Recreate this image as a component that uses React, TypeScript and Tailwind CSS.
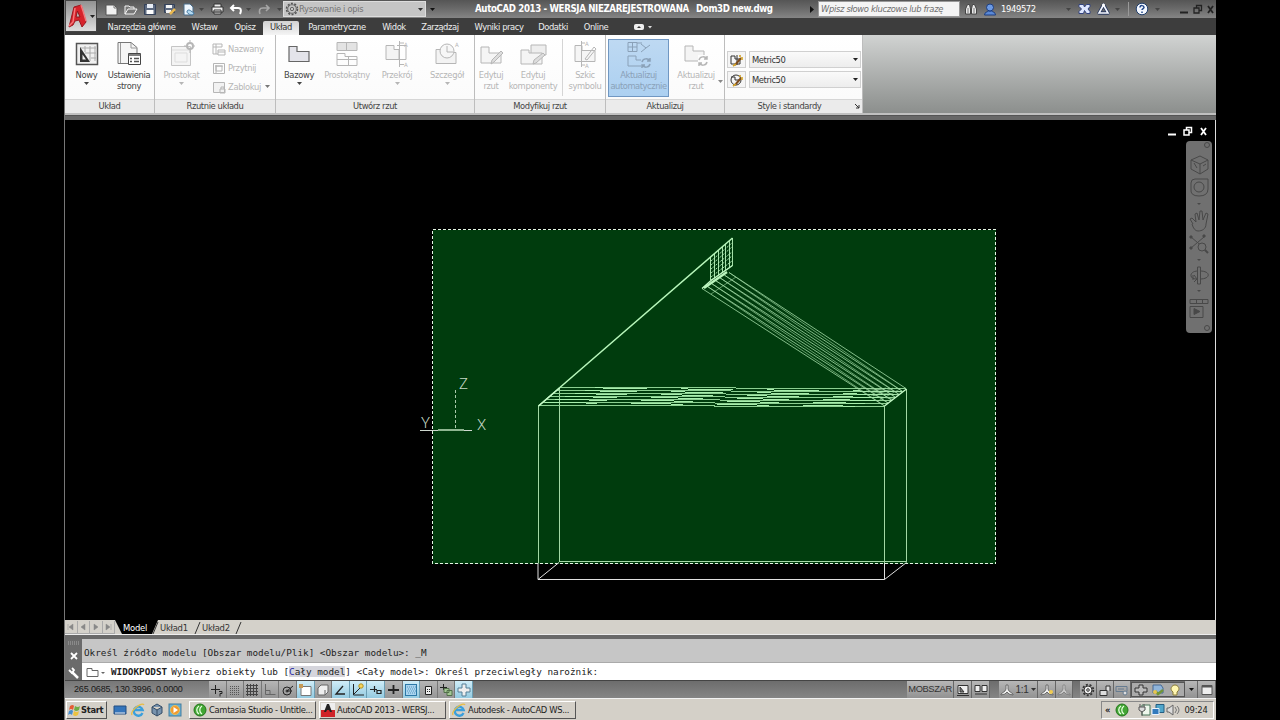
import type { ReactNode } from "react";

type SvgProps = { w?: number; h?: number; children: ReactNode; className?: string };

function Svg({ w = 14, h = 14, children, className }: SvgProps) {
  return (
    <svg width={w} height={h} viewBox={`0 0 ${w} ${h}`} fill="none" stroke="currentColor" className={`shrink-0 ${className ?? ""}`}>
      {children}
    </svg>
  );
}

function Caret({ className }: { className?: string }) {
  return (
    <Svg w={5} h={3} className={className}>
      <path d="M0 0h5L2.500 3z" fill="currentColor" stroke="none" />
    </Svg>
  );
}

function QuickAccess() {
  return (
    <div className="flex items-center text-white">
      <Svg w={15} className="mr-[4px]">
        <path d="M2 3h8l3 3v7H2z" fill="#f1f1f1" stroke="#555" />
        <path d="M10 3v3h3" stroke="#777" />
      </Svg>
      <Svg w={15} className="mr-[5px]">
        <path d="M2 12V4h4l1 1h4v2M2 12l3-5h9l-3 5z" fill="#777" stroke="#f5f5f5" />
      </Svg>
      <Svg w={14} className="mr-[6px]">
        <path d="M1.500 2.500h11v10h-11z" fill="#5d6a80" stroke="#35425a" />
        <path d="M4 2h6v4H4z" fill="#e8edf5" stroke="none" />
        <path d="M3.500 8h7v4h-7z" fill="#fff" stroke="none" />
      </Svg>
      <Svg w={14} className="mr-[5px]">
        <path d="M1.500 2.500h10v8h-10z" fill="#5d6a80" stroke="#35425a" />
        <path d="M3 3h6v3H3zM3 8h5v3H3z" fill="#f4f4f4" stroke="none" />
        <path d="M7 12l5-5" stroke="#e9b850" strokeWidth={2.500} />
      </Svg>
      <Svg w={14}>
        <path d="M2 2h6l3 3v8H2z" fill="#eef6fd" stroke="#486c8a" />
        <path d="M5 10c0-3 3-2 4-1l3 2c0 3-6 2-7-1z" fill="#b5daf1" stroke="#4377a0" />
      </Svg>
      <Caret className="ml-[3px] mr-[6px] text-[#444]" />
      <Svg w={15}>
        <path d="M4 5V2h7v3M2 5h11v5H2zM4 8h7v4H4z" fill="#eee" stroke="#333" />
        <path d="M5 10h5" stroke="#555" />
      </Svg>
      <Svg w={14} className="ml-[4px]">
        <path d="M5 3L2 6l3 3M2.500 6H9c4 0 3 4 2 6" stroke="#fff" strokeWidth={2} />
      </Svg>
      <Caret className="ml-[3px] mr-[7px] text-[#444]" />
      <Svg w={13}>
        <path d="M8 3l3 3-3 3M10.500 6H5C1 6 1 9 2 12" stroke="#a7a7a7" strokeWidth={1.600} />
      </Svg>
      <Caret className="ml-[6px] text-[#444]" />
    </div>
  );
}

function WindowButtons({ className }: { className?: string }) {
  return (
    <div className={`flex shrink-0 items-center ${className ?? ""}`}>
      <Svg w={10} h={12}>
        <path d="M1 9.500h8" strokeWidth={2} />
      </Svg>
      <Svg w={10} h={12}>
        <path d="M1 5h5v5H1zM3.500 5V2.500h5v5h-2" strokeWidth={1.500} />
      </Svg>
      <Svg w={9} h={12}>
        <path d="M2 3l5 7M7 3l-5 7" strokeWidth={1.800} />
      </Svg>
    </div>
  );
}

function Header() {
  return (
    <div className="relative">
      <div className="flex h-[18px] w-[1151px] items-center overflow-hidden bg-linear-to-b from-[#555] via-[#6b6b6b] to-[#858585] text-[9.300px]">
        <div className="flex w-[218px] shrink-0 justify-end pr-[1px]">
          <QuickAccess />
        </div>
        <div className="flex h-4 w-[143px] shrink-0 items-center border border-[#ddd] bg-[#c5c5c5] pl-px text-[#757575]">
          <Svg w={14}>
            <circle cx={7} cy={7} r={5.500} stroke="#555" strokeWidth={1.500} strokeDasharray="2 1.450" />
            <circle cx={7} cy={7} r={4.300} stroke="#666" />
            <circle cx={7} cy={7} r={1.700} stroke="#666" />
          </Svg>
          <span className="w-[119px] shrink-0 tracking-[-0.300px]">Rysowanie i opis</span>
          <Caret className="text-[#333]" />
        </div>
        <div className="w-[49px] shrink-0 pl-[4px]">
          <Caret className="text-[#111]" />
        </div>
        <div className="flex w-[343px] shrink-0 items-center whitespace-nowrap text-[9.600px] font-bold text-white">
          <span className="w-[221px] tracking-[-0.350px]">AutoCAD 2013 - WERSJA NIEZAREJESTROWANA</span>
          <span className="tracking-[-0.350px]">Dom3D new.dwg</span>
          <Svg w={5} h={7} className="ml-auto mr-[3px]">
            <path d="M0 0l4 3.500L0 7z" fill="#111" stroke="none" />
          </Svg>
        </div>
        <div className="flex h-4 w-[142px] shrink-0 items-center whitespace-nowrap border border-[#999] bg-[#f4f4f4] pl-[2px] italic tracking-[-0.320px] text-[#6e6e6e]">
          Wpisz słowo kluczowe lub frazę
        </div>
        <Svg w={14} className="ml-[4px]">
          <path d="M1.500 12V7l2-4.500h2l1 4.500v5zM7.500 12V7l1-4.500h2l2 4.500v5z" fill="#e9e9e9" stroke="#444" />
          <path d="M4 6v5M10 6v5" stroke="#777" />
        </Svg>
        <Svg w={14} className="ml-[5px]">
          <path d="M1.500 13c0-3 3-3 4-4h3c1 1 4 1 4 4z" fill="#5b89d6" stroke="#1c3d80" />
          <circle cx={7} cy={5.500} r={3.500} fill="#6c9ae4" stroke="#1c3d80" />
        </Svg>
        <span className="ml-[4px] w-[67px]">
          <span className="tracking-[-0.350px] text-white">1949572</span>
        </span>
        <Caret className="mr-[7px] text-[#444]" />
        <Svg w={13}>
          <path d="M1 2.500h4.500l1 2.500 2-2.500H12v2L10 7l2 2.500v2H8.500l-2-3-1 3H1v-2L3.500 7 1 4.500z" fill="#dfe7ff" stroke="#33437f" />
        </Svg>
        <Svg w={15} className="ml-[5px]">
          <path d="M7.500 3L12 11H3z" stroke="#29395f" strokeWidth={3.500} strokeLinejoin="round" />
          <path d="M7.500 3L12 11H3z" stroke="#f5f8ff" strokeWidth={1.600} />
          <circle cx={7.500} cy={3} r={1.500} fill="#fff" stroke="none" />
        </Svg>
        <Caret className="ml-[4px] text-[#444]" />
        <span className="ml-[8px] h-[14px] border-l border-[#999]" />
        <Svg w={14} className="ml-[6px]">
          <circle cx={7} cy={7} r={5.800} fill="#f4f8ff" stroke="#22406e" />
          <path d="M5 5.500c0-3 4-2 4 0 0 1-2 1.200-2 2.500M7 9.500V11" stroke="#1f4588" strokeWidth={1.500} />
        </Svg>
        <Caret className="ml-[6px] mr-[19px] text-[#444]" />
        <div className="flex gap-[4px]">
          <Svg w={10} h={12} className="text-[#222]">
            <path d="M1 9.500h8" strokeWidth={2} />
          </Svg>
          <Svg w={10} h={12} className="text-[#222]">
            <path d="M1 5h5v5H1zM3.500 5V2.500h5v5h-2" strokeWidth={1.300} />
          </Svg>
          <Svg w={9} h={12} className="text-[#222]">
            <path d="M1 3l5 7M6 3l-5 7" strokeWidth={1.800} />
          </Svg>
        </div>
      </div>
      <Tabs />
      {/* application button spans both header rows */}
      <div className="absolute left-0 top-0 flex h-[32px] w-[32px] items-center border border-[#444] bg-linear-to-b from-[#929292] to-[#dedede]">
        <Svg w={23} h={28}>
          <path d="M3 25L8 5l7-2 5 17-4 5-3-7-4 1-2 4z" fill="#d7232b" stroke="#9b1820" />
          <path d="M10 15l1.500-6 2.500 6z" fill="#bababa" stroke="#8f171d" />
          <path d="M3 24l4-4 2-14M15 3l2 6 3 10" stroke="#f6777a" strokeWidth={1.500} />
        </Svg>
        <Caret className="ml-px text-[#222]" />
      </div>
    </div>
  );
}

const tabs = [
  { name: "Narzędzia główne", width: "w-[81px]" },
  { name: "Wstaw", width: "w-[45px]" },
  { name: "Opisz", width: "w-[36px]" },
  { name: "Układ", width: "w-[36px]", active: true },
  { name: "Parametryczne", width: "w-[76px]" },
  { name: "Widok", width: "w-[38px]" },
  { name: "Zarządzaj", width: "w-[54px]" },
  { name: "Wyniki pracy", width: "w-[64px]" },
  { name: "Dodatki", width: "w-[44px]" },
  { name: "Online", width: "w-[42px]" },
];

function Tabs() {
  return (
    <div className="flex h-[17px] items-end bg-[#3d3d3d] pl-[36px] text-[9.300px] tracking-[-0.400px]">
      {tabs.map((tab) => (
        <div
          key={tab.name}
          className={`flex h-[14px] items-center justify-center whitespace-nowrap pb-[2px] ${tab.width} ${tab.active ? "rounded-t-xs bg-linear-to-b from-[#d2d2d2] to-[#f5f5f5] text-[#333]" : "text-[#eee]"}`}
        >
          {tab.name}
        </div>
      ))}
      <Svg w={20} h={10} className="mb-[3px] ml-[17px] text-[#eee]">
        <rect x={0.500} y={2.500} width={9} height={5} rx={1} fill="#eee" />
        <path d="M3 6l2-2 2 2z" fill="#333" stroke="none" />
        <path d="M14 4h4l-2 2.500z" fill="#ddd" stroke="none" />
      </Svg>
    </div>
  );
}

type ToolProps = { icon: ReactNode; lines: string[]; width: string; muted?: boolean; caret?: boolean };

function Tool({ icon, lines, width, muted, caret }: ToolProps) {
  return (
    <div className={`flex shrink-0 flex-col items-center ${width} ${muted ? "text-[#b6b6b6]" : "text-[#444]"}`}>
      <div className="flex h-[30px] items-center justify-center">{icon}</div>
      <div className="mt-px whitespace-nowrap text-center text-[9.300px] leading-[10.500px] tracking-[-0.350px]">
        {lines.map((line) => (
          <div key={line}>{line}</div>
        ))}
      </div>
      {caret && <Caret className="mt-px" />}
    </div>
  );
}

function Panel({ title, width, children, corner }: { title: string; width: string; children: ReactNode; corner?: boolean }) {
  return (
    <div className={`flex shrink-0 flex-col border-r border-[#bdbdbd] ${width}`}>
      <div className="flex h-[64px] bg-linear-to-b from-white to-[#fbfbfb] pt-[4px]">{children}</div>
      <div className="flex h-[14px] items-center border-t border-[#d6d6d6] bg-[#ebebeb] pb-px text-[9.300px] tracking-[-0.400px] text-[#444]">
        <span className="flex-1 text-center">{title}</span>
        {corner && (
          <Svg w={6} h={6} className="mr-[2px] text-[#333]">
            <path d="M1 1l4 4M5 2v3H2" />
          </Svg>
        )}
      </div>
    </div>
  );
}

const baseShape = "M3 6h8v6h12v10H3z";

function SmallTool({ label, icon, caret }: { label: string; icon: ReactNode; caret?: boolean }) {
  return (
    <div className="flex h-[19px] items-center text-[9.300px] tracking-[-0.350px] text-[#b6b6b6]">
      <Svg w={14}>{icon}</Svg>
      <span className="ml-[2px]">{label}</span>
      {caret && <Caret className="ml-[4px] text-[#777]" />}
    </div>
  );
}

function StyleRow({ icon }: { icon: ReactNode }) {
  return (
    <div className="flex h-[17px] items-center">
      <div className="flex h-[17px] w-[19px] items-center justify-center border border-[#d0d0d0] bg-[#f5f5f5]">
        <Svg w={15} className="text-[#333]">
          {icon}
          <path d="M6 12l6-7" stroke="#7b4c20" strokeWidth={2} />
          <path d="M4 13l3-2M11 2v2M13 4v3" stroke="#d3a329" strokeWidth={1.600} />
        </Svg>
      </div>
      <div className="ml-[3px] flex h-[17px] w-[112px] items-center border border-[#d0d0d0] bg-linear-to-b from-[#fafafa] to-[#ededed] pl-[2px] text-[9.300px] tracking-[-0.400px] text-[#333]">
        <span className="flex-1">Metric50</span>
        <Caret className="mr-[2px] text-[#222]" />
      </div>
    </div>
  );
}

function Ribbon() {
  return (
    <div className="flex h-[80px] border-b-2 border-[#c0c0c0] bg-linear-to-b from-[#d1d3d2] to-[#8c8f8d]">
      <Panel title="Układ" width="w-[90px]">
        <Tool
          width="w-[43px]"
          lines={["Nowy"]}
          caret
          icon={
            <Svg w={24} h={26}>
              <rect x={1.500} y={2.500} width={21} height={21} fill="#f0f0f0" stroke="#555" strokeWidth={1.500} />
              <path d="M10 5v6M15 5v15M20 5v15M5 7h16M10 12h11M16 17h5" stroke="#aaa" />
              <path d="M5 6v15h10z" fill="#333" stroke="none" />
              <path d="M7.500 13.500v5h3.500z" fill="#eee" stroke="none" />
            </Svg>
          }
        />
        <Tool
          width="w-[42px]"
          lines={["Ustawienia", "strony"]}
          icon={
            <Svg w={26} h={28}>
              <path d="M2 2.500h13l6 5v16H2z" fill="#f5f5f5" stroke="#777" />
              <path d="M4.500 3v20M15 3v5h6" stroke="#999" />
              <path d="M12.500 13.500h12v11h-12z" fill="#fff" stroke="#444" />
              <path d="M12 15h13M14 18.500h2M18 18.500h5M14 21.500h2M18 21.500h5" stroke="#555" strokeWidth={1.300} />
            </Svg>
          }
        />
      </Panel>
      <Panel title="Rzutnie układu" width="w-[121px]">
        <Tool
          width="w-[53px]"
          lines={["Prostokąt"]}
          muted
          caret
          icon={
            <Svg w={26} h={28}>
              <path d="M2.500 6.500h19v19h-19z" fill="#f4f4f4" stroke="#c5c5c5" />
              <path d="M3 10h18M6 13h12v9H6z" stroke="#ddd" />
              <circle cx={21} cy={6} r={3} strokeWidth={2} />
              <path d="M21 0v2M21 10v3M15 6h2M25 6h1" />
            </Svg>
          }
        />
        <div className="ml-[4px] flex flex-col">
          <SmallTool label="Nazwany" icon={<path d="M1 2h9v3M1 2v10h5M4 2v10M1 5h9M6 8h7v5H6zM6 10h7" />} />
          <SmallTool label="Przytnij" icon={<path d="M1.500 2.500h11v10h-11zM4 5h6v5H4zM3 5h8M4 4v8" />} />
          <SmallTool label="Zablokuj" caret icon={<path d="M1.500 2.500h11v10h-11zM8 9h5v4H8zM9 9V7h3v2" fill="#f2f2f2" />} />
        </div>
      </Panel>
      <Panel title="Utwórz rzut" width="w-[199px]">
        <Tool
          width="w-[46px]"
          lines={["Bazowy"]}
          caret
          icon={
            <Svg w={26} h={26}>
              <path d="M3 5.500h8v5h12v10H3z" fill="#e4e4ea" stroke="#666" strokeWidth={1.200} />
            </Svg>
          }
        />
        <Tool
          width="w-[50px]"
          lines={["Prostokątny"]}
          muted
          icon={
            <Svg w={24} h={28}>
              <path d="M2 2.500h20v8H2z" fill="#e3e3e3" />
              <path d="M11.500 2v8M2 13.500h8v3h12v9H2zM2 19.500h20M13.500 16v9" />
            </Svg>
          }
        />
        <Tool
          width="w-[50px]"
          lines={["Przekrój"]}
          muted
          caret
          icon={
            <Svg w={26} h={28}>
              <path d="M2 5.500h8v4h5v10H2z" fill="#f4f4f4" />
              <path d="M15.500 1v26M13 5.500h9v14h-9M15 3h5M15 24.500h5" />
              <text x={20} y={7} fontSize={6} fill="currentColor" stroke="none">A</text>
              <text x={20} y={27} fontSize={6} fill="currentColor" stroke="none">A</text>
            </Svg>
          }
        />
        <Tool
          width="w-[50px]"
          lines={["Szczegół"]}
          muted
          caret
          icon={
            <Svg w={26} h={28}>
              <path d="M2 9.500h7v3h13v11H2z" fill="#f3f3f3" />
              <circle cx={13} cy={11} r={7} fill="#f7f7f7" />
              <path d="M13 6v6h6" />
              <text x={21} y={7} fontSize={6} fill="currentColor" stroke="none">A</text>
            </Svg>
          }
        />
      </Panel>
      <Panel title="Modyfikuj rzut" width="w-[131px]">
        <Tool
          width="w-[32px]"
          lines={["Edytuj", "rzut"]}
          muted
          icon={
            <Svg w={26} h={26}>
              <path d={baseShape} fill="#f5f5f5" />
              <path d="M13 23l1-4 9-9 2 2-9 9z" fill="#ddd" />
            </Svg>
          }
        />
        <Tool
          width="w-[52px]"
          lines={["Edytuj", "komponenty"]}
          muted
          icon={
            <Svg w={28} h={26}>
              <path d="M12 4h15v10H12z" fill="#eee" />
              <path d="M2 9h8v3h13v11H2z" fill="#f4f4f4" />
              <path d="M14 23l1-4 9-7 2 2-9 8z" fill="#ddd" />
            </Svg>
          }
        />
        <div className="mx-[3px] h-[57px] w-px bg-[#d5d5d5]" />
        <Tool
          width="w-[38px]"
          lines={["Szkic", "symbolu"]}
          muted
          icon={
            <Svg w={26} h={28}>
              <path d="M3 5.500h7v5h13v11H3z" fill="#f5f5f5" />
              <path d="M9.500 1v26M9 3h4M9 25h4M13 19l9-12 2 2-9 11z" />
              <text x={13} y={6} fontSize={6} fill="currentColor" stroke="none">A</text>
              <text x={13} y={28} fontSize={6} fill="currentColor" stroke="none">A</text>
            </Svg>
          }
        />
      </Panel>
      <Panel title="Aktualizuj" width="w-[119px]">
        <div className="ml-[2px] flex h-[58px] w-[61px] border border-[#7097c2] bg-linear-to-b from-[#bed9f2] to-[#acd0f1] text-[#8aa1b8]">
          <div className="-mt-px flex w-full flex-col items-center">
            <Svg w={26} h={30}>
              <path d="M2 3.500h9v9H2zM6.500 3v9M2 8h9M11 4h5M15 5l5 4-5 4M20 9l4-3M2 17h8v4h12v6H2z" />
              <path d="M15 20h11v9H15z" fill="#b5d4f1" stroke="none" />
              <path d="M16 23c1-4 6-4 8-1M24 19v3h-3M24 25c-1 4-6 4-8 1M16 29v-3h3" strokeWidth={1.500} />
            </Svg>
            <div className="mt-px whitespace-nowrap text-center text-[9.300px] leading-[10.500px] tracking-[-0.450px]">
              <div>Aktualizuj</div>
              <div>automatycznie</div>
            </div>
          </div>
        </div>
        <Tool
          width="w-[54px]"
          lines={["Aktualizuj", "rzut"]}
          muted
          icon={
            <Svg w={26} h={26}>
              <path d="M2 5h8v5h11v10H2z" fill="#f4f4f4" />
              <path d="M15 14h11v11H15z" fill="#fdfdfd" stroke="none" />
              <path d="M16 19c1-4 6-4 8-1M24 15v3h-3M24 21c-1 4-6 4-8 1M16 25v-3h3" strokeWidth={1.500} />
            </Svg>
          }
        />
        <Caret className="-ml-[5px] mt-[41px] text-[#888]" />
      </Panel>
      <Panel title="Style i standardy" width="w-[138px]" corner>
        <div className="ml-[2px] mt-[12px] flex flex-col gap-[3px]">
          <StyleRow icon={<path d="M2 3h4v3h5v5H2zM8 2v10" />} />
          <StyleRow icon={<><circle cx={7} cy={7} r={5} /><path d="M2 4h4v3h5" /></>} />
        </div>
      </Panel>
    </div>
  );
}

// strips between two roof edges; t runs from the near edge to the far one
const strips = [0, 1 / 6, 2 / 6, 3 / 6, 4 / 6, 5 / 6, 1];

function Drawing() {
  return (
    <svg width={1150} height={500} viewBox="65 120 1150 500" fill="none" className="block">
      <rect x={432.500} y={229.500} width={563} height={334} fill="#003c0d" stroke="#e4f5e4" strokeDasharray="3 2" shapeRendering="crispEdges" />
      <g stroke="#a3d8a5" shapeRendering="crispEdges">
        <path d="M538 406v157M559.500 388v174M884.500 406v157M906 389v173M559 561.500h347" />
      </g>
      <g stroke="#e0e0e0">
        <path d="M538 563v16.500h346.500V563M538 579.500l21-17M884.500 579.500l22-17" />
      </g>
      <path d="M538.500 406L732.500 238" stroke="#b8f7bb" strokeWidth={1.500} />
      <g stroke="#8ccf91" shapeRendering="crispEdges">
        {strips.map((t) => (
          <path key={t} d={`M${538.500 + 21 * t} ${405.500 - 18 * t}L${884.500 + 21.500 * t} ${406.500 - 18 * t}`} />
        ))}
        {strips.slice(1).map((t) => (
          <path key={t} d={`M${538.500 + 21 * t} ${405.500 - 18 * t}L${881 + 21.500 * t} ${409.500 - 18 * t}`} stroke="#a8efad" strokeDasharray="52 34" strokeDashoffset={90 - 40 * t} />
        ))}
      </g>
      <g stroke="#a5dda8" strokeWidth={0.800}>
        {strips.map((t) => (
          <path key={t} d={`M${702 + 27 * t} ${288.500 - 16 * t}L${884.500 + 21.500 * t} ${406 - 17.500 * t}`} />
        ))}
        {strips.slice(1).map((t) => (
          <path key={t} d={`M${702 + 27 * t} ${288.500 - 16 * t}L${881 + 21.500 * t} ${408.800 - 17.500 * t}`} strokeWidth={0.600} />
        ))}
        {/* cross lines where the slope meets the eaves */}
        <path d="M861 388l41 4M866 391l32 4M871 395l22 4M711 294l25-17M868 392l18-4M873 396l20-8M878 401l22-12" opacity={0.700} />
      </g>
      <path d="M702 288.500l9-8 21.500-15M538.500 406l21-18M884.500 406l22-17" stroke="#c7fbc9" strokeWidth={1.300} />
      <path d="M704 288l23-16" stroke="#baf5bd" strokeWidth={2.300} />
      <g stroke="#b8f4bb" strokeWidth={0.900}>
        <path d="M710.500 257v23M714.500 254v24M718.500 250v25M722.500 247v25M725.500 244v26M729.500 241v26M732.500 238v28" />
        <path d="M711 261l21-18M711 265l21-18M711 269l21-17M711 273l21-17M711 277l21-16M711 280l21-14" strokeDasharray="2 1" />
      </g>
      <g stroke="#a9c9aa" shapeRendering="crispEdges">
        <path d="M455.500 390v40" strokeDasharray="3 2" />
        <path d="M420 430.500h18M464 430.500h8" stroke="#cfd8cf" />
        <path d="M438 429.500h26" stroke="#8fb691" strokeWidth={2} />
      </g>
      <g fill="#c4d8c5" fontFamily="Roboto, sans-serif" fontWeight={300} fontSize={15} letterSpacing={0}>
        <text x={459} y={389}>Z</text>
        <text x={477} y={430}>X</text>
        <text x={421} y={428}>Y</text>
      </g>
    </svg>
  );
}

function NavigationBar() {
  return (
    <div className="absolute right-[3px] top-[21px] h-[192px] w-[26px] rounded-sm bg-[#707070] text-[#484848]">
      <Svg w={26} h={192}>
        <circle cx={21} cy={4} r={2.500} />
        <path d="M5 19l9-4 8 4v9l-8 5-9-5zM5 19l9 4 8-4M14 23v10M8 22l3 5M17 25l3-2" />
        <path d="M5 42q0-4 4-4h13v10q0 7-9 7t-8-7z" />
        <circle cx={13} cy={46} r={5} />
        <path d="M11 62h4l-2 2zM11 118h4l-2 2zM11 149h4l-2 2z" fill="currentColor" stroke="none" />
        <path d="M7 83l-3-5 2-1 4 4-1-8 2-1 2 7 1-9h2l1 9 3-7 2 1-2 10c0 5-4 7-8 7q-4 0-6-7" />
        <path d="M5 96l13 11M5 107L18 96" />
        <path d="M4 95h2v2H4zM17 94h2v2h-2zM4 106h2v2H4z" fill="currentColor" />
        <circle cx={16} cy={106} r={4} fill="#707070" />
        <path d="M19 109l3 3" strokeWidth={2} />
        <path d="M11.500 126h3v17h-3zM14 130c11 0 11 8 0 8M12 130c-9 0-9 8-2 8M8 134l3 4-3 3M7 134v5" />
        <path d="M4 158.500h18v4H4zM10.500 158v5M16.500 158v5M4 165.500h13v11H4z" />
        <path d="M8 167.500l6 3-6 3z" fill="currentColor" />
        <circle cx={21} cy={187} r={2.500} />
      </Svg>
    </div>
  );
}

function LayoutTabs() {
  return (
    <div className="flex h-[15px] items-center border-b border-[#eee] bg-[#d4d1ca] text-[9.500px] text-[#333]">
      {["M8 3v6L4 6zM3 3v6", "M8 3v6L4 6z", "M4 3v6l4-3z", "M4 3v6l4-3zM9 3v6"].map((d) => (
        <div key={d} className="flex h-[13px] w-[12.500px] items-center justify-center border-r border-b border-[#aaa]">
          <Svg w={12} h={12} className="text-[#888]">
            <path d={d} fill="currentColor" strokeWidth={0.500} />
          </Svg>
        </div>
      ))}
      <svg width={128} height={14} viewBox="0 0 128 14" className="text-[9.400px] tracking-[-0.250px]">
        <path d="M0 0h43l-6 14H7z" fill="#000" />
        <path d="M43 2l-5 12M85 2l-5 12M126 2l-5 12" stroke="#333" fill="none" />
        <text x={8} y={10.500} fill="#fff">Model</text>
        <text x={45} y={10.500} fill="#333">Układ1</text>
        <text x={87} y={10.500} fill="#333">Układ2</text>
      </svg>
    </div>
  );
}

function CommandLine() {
  return (
    <div className="flex h-[45px] border-t-4 border-[#696969]">
      <div className="flex w-[17px] flex-col items-center bg-[#6b6b6b] text-white">
        <Svg w={15} h={41}>
          <path d="M2 3h12M2 5h12" stroke="#aaa" strokeDasharray="1 1" />
          <path d="M5 14l6 6M11 14l-6 6" strokeWidth={1.800} />
          <path d="M6 33l6 6" strokeWidth={2.500} />
          <path d="M3 31l3 3 2-3-2-2" strokeWidth={1.800} />
        </Svg>
      </div>
      <div className="flex-1 whitespace-pre font-['DejaVu_Sans_Mono','Liberation_Mono',monospace] text-[9.340px] text-[#222]">
        <div className="flex h-[24px] items-end border-b border-[#aaa] bg-[#c6c6c6] pb-[3px] pl-[2px] leading-[12px]">Określ źródło modelu [Obszar modelu/Plik] &lt;Obszar modelu&gt;: _M</div>
        <div className="flex h-[17px] items-center bg-white pl-[4px]">
          <Svg w={20} h={12} className="mr-[5px] text-[#666]">
            <path d="M1 2.500h5v2h6v6H1z" />
            <path d="M15 6h4l-2 2z" fill="currentColor" stroke="none" />
          </Svg>
          <b className="mr-[4px]">WIDOKPODST</b>
          <span>Wybierz obiekty lub [</span>
          <span className="bg-[#d5d5dc] py-px">
            <span className="text-[#2929a5]">C</span>ały model
          </span>
          <span>] &lt;Cały model&gt;: Określ przeciwległy narożnik:</span>
        </div>
      </div>
    </div>
  );
}

const toggles: { on?: boolean; icon: ReactNode }[] = [
  { icon: <path d="M6.500 3v9M2 7.500h9M10 9.500h3v2h-2v3" /> },
  { icon: <path d="M3 4.500h9M3 6.500h9M3 8.500h9M3 10.500h9M3 12.500h9" strokeDasharray="1 1" stroke="#555" /> },
  { icon: <path d="M2 3.500h12M2 6.500h12M2 9.500h12M2 12.500h12M3.500 2v12M6.500 2v12M9.500 2v12M12.500 2v12" stroke="#444" /> },
  { icon: <path d="M3.500 2v10.500h10M4 8.500h4v4" stroke="#666" /> },
  { icon: <><circle cx={7} cy={9} r={4} /><path d="M7 9l6-5M7 9h5" /><circle cx={7} cy={9} r={1} /></> },
  { on: true, icon: <><path d="M4 4.500h10v9H4z" fill="#fff" stroke="#777" /><path d="M2 2h4v4H2z" fill="#c79a56" stroke="none" /></> },
  { icon: <path d="M3 6l3-3h7v7l-3 3H3zM10 13V8" fill="#eee" stroke="#666" /> },
  { on: true, icon: <path d="M11 4L4 12h9" strokeWidth={1.300} /> },
  { on: true, icon: <><path d="M3.500 2v11H14M3 13l8-8" /><circle cx={11} cy={4} r={2.200} fill="#f7d35d" stroke="#b39422" /></> },
  { on: true, icon: <path d="M2 7.500h7M6.500 4v6M9 8.500h4v3H9z" strokeWidth={1.200} /> },
  { icon: <path d="M8.500 3v9M3 8h11" strokeWidth={1.800} /> },
  { on: true, icon: <><rect x={2.500} y={2.500} width={11} height={11} fill="#aad4ef" stroke="#2c78a7" /><path d="M4 5h9M5 7h8M4 9h9M5 11h8" stroke="#5797bd" strokeDasharray="1 1" /></> },
  { icon: <><path d="M5.500 4.500h6v8h-6z" fill="#eee" /><path d="M7 7.500h3M7 9.500h3" strokeDasharray="1 1" /></> },
  { icon: <><path d="M5.500 2v6M2 5.500h7" /><path d="M6 6.500h5v4H6zM9 8.500h5v5H9z" fill="#a4c995" stroke="#52714b" /></> },
  { on: true, icon: <path d="M6 2h4v4h4v4h-4v4H6v-4H2V6h4z" fill="#eee" stroke="#557f96" /> },
];

function StatusCell({ children, width = "w-[17px]" }: { children: ReactNode; width?: string }) {
  return <div className={`flex h-[17px] shrink-0 items-center justify-center border-r border-[#666] bg-linear-to-b from-[#b7b7b7] to-[#929292] text-[#333] ${width}`}>{children}</div>;
}

function Scale({ extra }: { extra?: string }) {
  return (
    <Svg w={14}>
      <path d="M6 2h2v4l1 2 4 3v1l-4-1-2-2-2 2-4 1v-1l4-3 1-2z" fill="#eee" stroke="#555" strokeWidth={0.800} />
      {extra && <circle cx={11} cy={9} r={2} fill={extra} stroke="none" />}
    </Svg>
  );
}

function StatusBar() {
  return (
    <div className="flex h-[18px] items-center border-t border-[#444] bg-linear-to-b from-[#6d6d6d] to-[#858585]">
      <div className="flex h-full w-[144px] items-center bg-linear-to-b from-[#777] to-[#919191] pl-[9px] font-['Liberation_Sans',Arial,sans-serif] text-[9px] tracking-[-0.150px] text-[#181818]">265.0685, 130.3996, 0.0000</div>
      {toggles.map((toggle, i) => (
        <div key={i} className={`flex h-[17px] w-[17.600px] items-center justify-center border-r text-[#222] ${toggle.on ? "border-[#6b9eb4] bg-linear-to-b from-[#d0edf8] to-[#94cae0]" : "border-[#777] bg-linear-to-b from-[#b5b5b5] to-[#969696]"}`}>
          <Svg w={16} h={16}>{toggle.icon}</Svg>
        </div>
      ))}
      <div className="ml-auto flex items-center">
        <StatusCell width="w-[47px]">
          <span className="font-['Liberation_Sans',Arial,sans-serif] text-[9.300px] tracking-[-0.350px]">MOBSZAR</span>
        </StatusCell>
        <StatusCell width="w-[18px]"><Svg><path d="M2 2.500h10v8H2z" fill="#eee" /><path d="M4 4l4 5H4z" fill="#777" /><path d="M1 12.500h12" /></Svg></StatusCell>
        <StatusCell width="w-[18px]"><Svg><path d="M1 2.500h5v6H1zM8 2.500h5v6H8z" fill="#eee" /><path d="M1 11h12" /></Svg></StatusCell>
        <div className="w-[9px]" />
        <StatusCell width="w-[39px]"><Scale /><span className="ml-px font-['Liberation_Sans',Arial,sans-serif] text-[10px] tracking-[-0.300px]">1:1</span><Caret className="ml-[2px]" /></StatusCell>
        <StatusCell width="w-[18px]"><Scale extra="#f1cc50" /></StatusCell>
        <StatusCell width="w-[17px]"><div className="opacity-50"><Scale extra="#999" /></div></StatusCell>
        <div className="w-[7px]" />
        <StatusCell width="w-[17px]"><Svg><circle cx={7} cy={7} r={5.300} stroke="#333" strokeWidth={1.800} strokeDasharray="2 1.700" /><circle cx={7} cy={7} r={4} fill="#eee" /><circle cx={7} cy={7} r={1.300} /></Svg></StatusCell>
        <StatusCell width="w-[17px]"><Svg><path d="M2 7.500h7v5H2zM8 7V3h4v5" fill="#ddd" /></Svg></StatusCell>
        <StatusCell width="w-[17px]"><Svg><path d="M1 3.500h11v5H1zM3 6h6" stroke="#667b90" /><circle cx={10} cy={10} r={2} fill="#ddd" stroke="#667b90" /></Svg></StatusCell>
        <div className="flex h-[15px] w-[54px] items-center justify-around border border-[#555] bg-[#aaa]">
          <Svg><path d="M5 2h4v3h4v4H9v3H5V9H1V5h4z" fill="#bbb" stroke="#333" /></Svg>
          <Svg><path d="M2 2h8l2 3v5H2z" fill="#8fb4da" stroke="#466993" /><path d="M4 8l3 3 5-4" stroke="#719437" strokeWidth={2.500} /><circle cx={4} cy={9} r={2} fill="#e8c54f" stroke="none" /></Svg>
          <Svg><path d="M5 9c-4-3-1-7 2-7s6 4 2 7v3H5z" fill="#fff7b1" stroke="#8b7d37" /></Svg>
        </div>
        <StatusCell width="w-[13px]"><Caret className="text-[#111]" /></StatusCell>
        <StatusCell width="w-[18px]"><Svg><path d="M2 2.500h10v9H2z" fill="#eee" stroke="#555" /><path d="M2 3.500h10" strokeWidth={2} stroke="#555" /></Svg></StatusCell>
      </div>
    </div>
  );
}

function IeIcon() {
  return (
    <Svg>
      <path d="M11.500 10A4.500 4.500 0 1 1 11.700 7H4" stroke="#3a9fdc" strokeWidth={2.300} />
      <path d="M1 12C-1 8 11-2 13 2" stroke="#e8bd45" strokeWidth={1.300} />
    </Svg>
  );
}

const camtasia = (
  <Svg>
    <circle cx={7} cy={7} r={6} fill="#42a633" stroke="#24751d" />
    <path d="M6 3C3 5 3 9 6 11M9 3C6 5 6 9 9 11" stroke="#e7ffe0" strokeWidth={1.300} />
  </Svg>
);

const windows = [
  { title: "Camtasia Studio - Untitle...", icon: camtasia, left: "pl-[3px]" },
  {
    title: "AutoCAD 2013 - WERSJ...",
    left: "pl-px",
    icon: (
      <Svg>
        <rect width={14} height={14} fill="#cf2328" stroke="none" />
        <rect width={14} height={7} fill="#eee" stroke="none" />
        <path d="M3 9L6 1h2l3 8H9L8 7H6L5 9z" fill="#222" stroke="none" />
      </Svg>
    ),
  },
  { title: "Autodesk - AutoCAD WS...", icon: <IeIcon />, left: "pl-[2px]" },
];

function Taskbar() {
  return (
    <div className="flex h-[22px] items-center border-t border-[#f2f2f2] bg-[#d4d0c8] pl-px text-[9.300px] text-[#222]">
      <div className="flex h-[18px] w-[41px] shrink-0 items-center border border-t-white border-l-white border-r-[#555] border-b-[#555] pl-px font-bold">
        <Svg w={13}>
          <path d="M2 3q3-2 4 0L5 7Q3 5 1 7z" fill="#e55c34" stroke="none" />
          <path d="M7 3q3 2 5 0l-1 4Q8 9 6 7z" fill="#70ad45" stroke="none" />
          <path d="M1 8q3-2 4 0l-1 4q-2-2-4 0z" fill="#468dce" stroke="none" />
          <path d="M6 8q3 2 5 0l-1 4q-3 2-5 0z" fill="#edc340" stroke="none" />
        </Svg>
        <span className="tracking-[-0.300px]">Start</span>
      </div>
      <div className="ml-[6px] mr-[7px] flex w-[69px] shrink-0 justify-between">
        <Svg><path d="M1 3h12v8H1z" fill="#3475bb" stroke="#244f80" /><path d="M2 10h10" stroke="#eee" /></Svg>
        <IeIcon />
        <Svg><path d="M2 4l5-3 5 3v6l-5 3-5-3zM2 4l5 3 5-3M7 7v6" fill="#7792ad" stroke="#344d67" /></Svg>
        <Svg><rect x={1} y={1} width={12} height={12} fill="#66b1d9" stroke="#447d9c" /><circle cx={7} cy={7} r={4.500} fill="#f39a2f" stroke="#e5c05c" /><path d="M5.500 4v6L10 7z" fill="#fff" stroke="none" /></Svg>
      </div>
      {windows.map((item) => (
        <div key={item.title} className={`mr-[3px] flex h-[18px] w-[127px] shrink-0 items-center whitespace-nowrap border border-t-white border-l-white border-r-[#555] border-b-[#555] ${item.left}`}>
          {item.icon}
          <span className="ml-[2px] tracking-[-0.330px]">{item.title}</span>
        </div>
      ))}
      <div className="ml-auto mr-[2px] flex h-[18px] w-[113px] items-center border border-t-[#888] border-l-[#888] border-r-white border-b-white pl-[3px]">
        <span className="font-bold">«</span>
        <div className="ml-[5px]">{camtasia}</div>
        <Svg className="ml-[8px]"><path d="M5 2h8v10H5z" fill="#eef7ec" stroke="#48765b" /><path d="M2 4h6v3L5 9 2 7zM3 1v3M7 1v3M5 9v4" fill="#ddd" stroke="#555" /></Svg>
        <Svg><path d="M5 1.500h8v8H5z" fill="#51a6ca" stroke="#255e82" /><path d="M1 5.500h7v6H1z" fill="#337bbd" stroke="#e8f2fc" /></Svg>
        <Svg w={15}><path d="M2 5h2l4-3v10L4 9H2z" fill="#ddd" stroke="#666" /><path d="M10 4q3 3 0 6M12 3q4 4 0 8" stroke="#777" /></Svg>
        <span className="ml-[4px] tracking-[-0.200px]">09:24</span>
      </div>
    </div>
  );
}

export default function App() {
  return (
    <div className="flex h-[720px] w-[1280px] overflow-hidden bg-black pl-[64px] font-['DejaVu_Sans_Condensed','DejaVu_Sans',sans-serif] leading-none">
      <div className="flex w-[1152px] shrink-0 flex-col border-l border-[#777]">
        <Header />
        <Ribbon />
        <div className="h-[5px] border-t border-[#555] bg-[#686868]" />
        <div className="relative h-[500px] border-r border-[#ddd] bg-black">
          <Drawing />
          <div className="absolute right-[7px] top-[5px]">
            <div className="flex w-[41px] text-white">
              <WindowButtons className="w-full justify-between" />
            </div>
          </div>
          <NavigationBar />
        </div>
        <LayoutTabs />
        <CommandLine />
        <StatusBar />
        <Taskbar />
      </div>
    </div>
  );
}
